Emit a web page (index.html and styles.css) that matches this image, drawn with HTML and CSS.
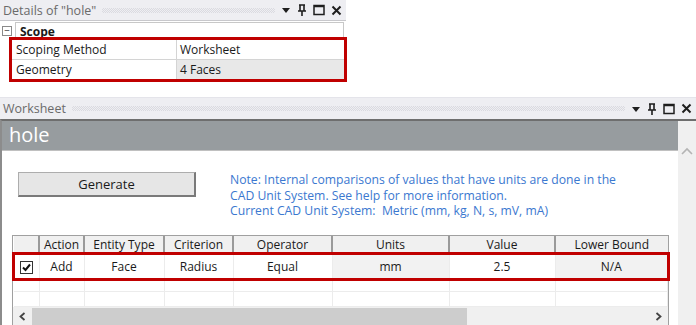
FILE: index.html
```html
<!DOCTYPE html>
<html>
<head>
  <meta charset="UTF-8">
  <title>Details and Worksheet</title>
  <link rel="stylesheet" href="styles.css">
</head>
<body>
<div class="details">
  <div class="titlebar">
    <span class="title">Details of "hole"</span>
    <span class="grip"></span>
    <span class="tools">
      <svg width="10" height="10" viewBox="0 0 10 10"><path d="M1 3h8l-4 5z" fill="#1e1e1e"/></svg>
      <svg width="10" height="12" viewBox="0 0 10 12"><path d="M2 1h6M3 1v6M7 1v6M1 7h8M5 7v5" stroke="#1e1e1e" stroke-width="1.6" fill="none"/></svg>
      <svg width="12" height="12" viewBox="0 0 12 12"><rect x="1" y="1.5" width="10" height="9" stroke="#1e1e1e" stroke-width="1.5" fill="none"/><path d="M1 2.5h10" stroke="#1e1e1e" stroke-width="1.5"/></svg>
      <svg width="11" height="11" viewBox="0 0 11 11"><path d="M1.5 1.5l8 8M9.5 1.5l-8 8" stroke="#1e1e1e" stroke-width="2"/></svg>
    </span>
  </div>
  <div class="group">
    <span class="toggle">−</span>
    <div class="group-name">Scope</div>
  </div>
  <div class="props">
    <div class="prop">
      <div class="prop-name">Scoping Method</div>
      <div class="prop-value">Worksheet</div>
    </div>
    <div class="prop">
      <div class="prop-name">Geometry</div>
      <div class="prop-value readonly">4 Faces</div>
    </div>
  </div>
</div>

<div class="worksheet">
  <div class="titlebar">
    <span class="title">Worksheet</span>
    <span class="grip"></span>
    <span class="tools">
      <svg width="10" height="10" viewBox="0 0 10 10"><path d="M1 3h8l-4 5z" fill="#1e1e1e"/></svg>
      <svg width="10" height="12" viewBox="0 0 10 12"><path d="M2 1h6M3 1v6M7 1v6M1 7h8M5 7v5" stroke="#1e1e1e" stroke-width="1.6" fill="none"/></svg>
      <svg width="12" height="12" viewBox="0 0 12 12"><rect x="1" y="1.5" width="10" height="9" stroke="#1e1e1e" stroke-width="1.5" fill="none"/><path d="M1 2.5h10" stroke="#1e1e1e" stroke-width="1.5"/></svg>
      <svg width="11" height="11" viewBox="0 0 11 11"><path d="M1.5 1.5l8 8M9.5 1.5l-8 8" stroke="#1e1e1e" stroke-width="2"/></svg>
    </span>
  </div>
  <div class="ws-body">
    <div class="ws-main">
      <div class="heading">hole</div>
      <div class="toolbar">
        <button class="generate">Generate</button>
        <p class="note">Note: Internal comparisons of values that have units are done in the<br>CAD Unit System. See help for more information.<br>Current CAD Unit System:&nbsp; Metric (mm, kg, N, s, mV, mA)</p>
      </div>
      <div class="grid-wrap">
        <table class="grid">
          <thead>
            <tr>
              <th class="c-check"></th>
              <th class="c-action">Action</th>
              <th class="c-entity">Entity Type</th>
              <th class="c-crit">Criterion</th>
              <th class="c-op">Operator</th>
              <th class="c-units">Units</th>
              <th class="c-value">Value</th>
              <th class="c-lower">Lower Bound</th>
            </tr>
          </thead>
          <tbody>
            <tr class="selected">
              <td><span class="checkbox"><svg width="11" height="11" viewBox="0 0 11 11"><path d="M2 5.5l2.5 2.5 4.5-5.5" stroke="#111" stroke-width="2" fill="none"/></svg></span></td>
              <td>Add</td>
              <td>Face</td>
              <td>Radius</td>
              <td>Equal</td>
              <td class="shaded">mm</td>
              <td>2.5</td>
              <td class="shaded">N/A</td>
            </tr>
            <tr class="empty"><td></td><td></td><td></td><td></td><td></td><td></td><td></td><td></td></tr>
            <tr class="empty"><td></td><td></td><td></td><td></td><td></td><td></td><td></td><td></td></tr>
          </tbody>
        </table>
        <div class="hscroll">
          <span class="arrow"><svg width="7" height="9" viewBox="0 0 7 9"><path d="M5.5 1l-4 3.5 4 3.5" stroke="#444" stroke-width="1.8" fill="none"/></svg></span>
          <span class="track"><span class="thumb"></span></span>
          <span class="arrow"><svg width="7" height="9" viewBox="0 0 7 9"><path d="M1.5 1l4 3.5-4 3.5" stroke="#444" stroke-width="1.8" fill="none"/></svg></span>
        </div>
      </div>
    </div>
    <div class="vscroll">
      <svg width="12" height="8" viewBox="0 0 12 8"><path d="M1 7l5-5 5 5" stroke="#b4b4b4" stroke-width="1.6" fill="none"/></svg>
    </div>
  </div>
</div>
</body>
</html>
```

FILE: styles.css
```css
body {
  margin: 0;
  background: #fff;
  font-family: "Open Sans", "Noto Sans", sans-serif;
  font-size: 12px;
  color: #1a1a1a;
}
.titlebar {
  height: 20px;
  display: flex;
  align-items: center;
  background: #eeeef2;
  border-bottom: 1px solid #c8c8cc;
  padding: 0 4px 0 3px;
}
.titlebar .title {
  font-size: 12.5px;
  color: #6a6a6a;
  white-space: nowrap;
}
.titlebar .grip {
  flex: 1;
  height: 5px;
  margin: 0 6px 0 6px;
  background-image:
    linear-gradient(45deg, #dadae0 25%, transparent 25%, transparent 75%, #dadae0 75%),
    linear-gradient(45deg, #dadae0 25%, transparent 25%, transparent 75%, #dadae0 75%);
  background-size: 2px 2px;
  background-position: 0 0, 1px 1px;
}
.titlebar .tools {
  display: flex;
  align-items: center;
  gap: 6px;
}
.details {
  width: 346px;
}
.group {
  display: flex;
  align-items: center;
  height: 18px;
  margin-top: 1px;
}
.toggle {
  width: 8px;
  height: 8px;
  margin: 0 3px 0 2px;
  border: 1px solid #8a8a8a;
  font-size: 10px;
  line-height: 7px;
  text-align: center;
  color: #333;
}
.group-name {
  flex: 1;
  height: 17px;
  line-height: 17px;
  padding-left: 4px;
  font-weight: bold;
  border: 1px solid #c8c8c8;
  border-bottom: none;
  margin-right: 2px;
}
.props {
  margin: 0 2px 0 12px;
  outline: 3px solid #c00000;
}
.prop {
  display: flex;
  height: 19px;
  line-height: 19px;
  border-bottom: 1px solid #d4d4d4;
}
.prop:last-child {
  border-bottom: none;
}
.prop-name {
  width: 160px;
  padding-left: 4px;
  border-right: 1px solid #d4d4d4;
}
.prop-value {
  flex: 1;
  padding-left: 3px;
}
.prop-value.readonly {
  background: #e8e8e8;
}
.worksheet {
  margin-top: 18px;
  border-top: 1px solid #e4e4ea;
}
.worksheet .titlebar {
  height: 21px;
  border-bottom: none;
}
.ws-body {
  display: flex;
  border-left: 2px solid #8c8c8c;
  border-top: 2px solid #6e6e6e;
}
.ws-main {
  flex: 1;
}
.heading {
  height: 29px;
  line-height: 28px;
  padding-left: 7px;
  background: #979c9f;
  color: #fff;
  font-size: 20px;
  border-bottom: 1px solid #c0c0c0;
}
.vscroll {
  width: 18px;
  background: #f0f0f0;
  display: flex;
  justify-content: center;
  padding-top: 26px;
  align-items: flex-start;
}
.toolbar {
  display: flex;
  align-items: flex-start;
  padding: 21px 0 0 16px;
  height: 63px;
}
.generate {
  width: 178px;
  height: 25px;
  background: #e6e6e6;
  border: 1px solid #adadad;
  border-right: 2px solid #7a7a7a;
  border-bottom: 2px solid #7a7a7a;
  font-family: inherit;
  font-size: 13px;
  color: #1a1a1a;
}
.note {
  margin: 0 0 0 34px;
  color: #3b78d0;
  font-size: 12.2px;
  line-height: 15.5px;
}
.grid-wrap {
  margin-left: 10px;
  margin-right: 9px;
  border: 1px solid #a0a0a0;
  border-bottom: none;
}
.grid {
  width: 100%;
  border-collapse: collapse;
  table-layout: fixed;
}
.grid th {
  height: 17px;
  padding: 0;
  font-weight: normal;
  background: #f0f0f0;
  border-right: 2px solid #9a9a9a;
  border-left: 1px solid #fff;
  border-bottom: 1px solid #d0d0d0;
}
.grid th:last-child {
  border-right: none;
}
.c-check { width: 24px; }
.c-action { width: 43px; }
.c-entity { width: 78px; }
.c-crit { width: 67px; }
.c-op { width: 97px; }
.c-units { width: 115px; }
.c-value { width: 104px; }
.grid td {
  padding: 0;
  text-align: center;
  border-right: 1px solid #ececec;
  border-bottom: 1px solid #ececec;
}
.grid .selected td {
  height: 24px;
}
.grid .selected {
  outline: 3px solid #c00000;
  outline-offset: -1px;
}
.grid td.shaded {
  background: #f2f2f2;
}
.grid .empty td {
  height: 12px;
}
.grid .empty + .empty td {
  height: 14px;
}
.checkbox {
  display: inline-flex;
  align-items: center;
  justify-content: center;
  width: 11px;
  height: 11px;
  border: 1px solid #333;
  background: #fff;
  vertical-align: middle;
}
.hscroll {
  display: flex;
  align-items: center;
  height: 19px;
  background: #f0f0f0;
}
.hscroll .arrow {
  width: 19px;
  height: 17px;
  display: flex;
  align-items: center;
  justify-content: center;
}
.hscroll .track {
  flex: 1;
  height: 17px;
}
.hscroll .thumb {
  display: block;
  width: 435px;
  height: 100%;
  background: #cdcdcd;
}
```
